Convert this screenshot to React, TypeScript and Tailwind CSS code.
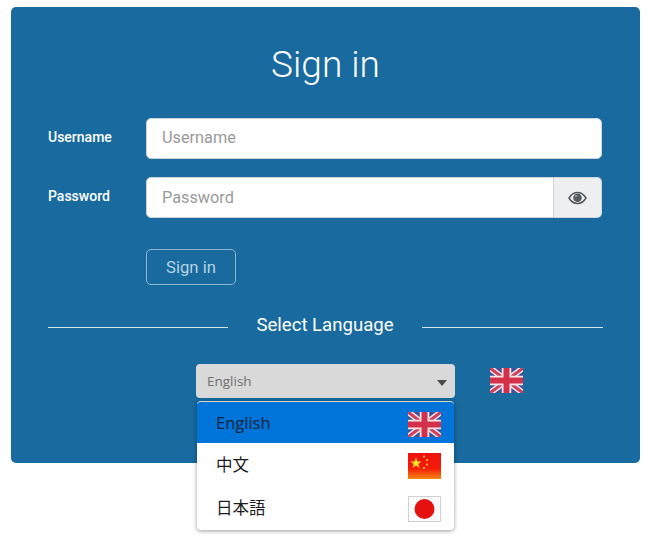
const UkFlag = () => (
    <svg width="33" height="25" viewBox="0 0 33 25" className="mt-[1px] block blur-[0.5px]">
        <rect width="33" height="25" fill="#3f5199" />
        <path d="M0 0L33 25M33 0L0 25" stroke="#f6e6ea" strokeWidth="6" />
        <path d="M0 0L33 25M33 0L0 25" stroke="#d0405a" strokeWidth="3" />
        <path d="M16.500 0V25M0 12.500H33" stroke="#f6e6ea" strokeWidth="9.500" />
        <path d="M16.500 0V25M0 12.500H33" stroke="#d3304a" strokeWidth="6" />
    </svg>
)

const CnFlag = () => (
    <svg width="33" height="26" viewBox="0 0 33 26" className="mt-[1px] block blur-[0.3px]">
        <defs>
            <linearGradient id="cn" x1="0" y1="0" x2="0" y2="1">
                <stop offset="0" stopColor="#f01010" />
                <stop offset="0.6" stopColor="#f51c08" />
                <stop offset="1" stopColor="#f58a10" />
            </linearGradient>
        </defs>
        <rect width="33" height="26" fill="url(#cn)" />
        <path d="M8 4.500l1.500 4h4l-3.200 2.500 1.200 4-3.500-2.400-3.500 2.400 1.200-4-3.200-2.500h4z" fill="#fde02a" />
        <circle cx="16" cy="3.500" r="1" fill="#fde02a" />
        <circle cx="19" cy="7" r="1" fill="#fde02a" />
        <circle cx="19" cy="11.500" r="1" fill="#fde02a" />
        <circle cx="16" cy="15" r="1" fill="#fde02a" />
    </svg>
)

const JpFlag = () => (
    <svg width="33" height="26" viewBox="0 0 33 26" className="mt-[1px] block">
        <rect x="0.500" y="0.500" width="32" height="25" fill="#fbfbfb" stroke="#d0d0d0" />
        <circle cx="16.500" cy="13" r="10" fill="#e5100f" />
    </svg>
)

const EyeIcon = () => (
    <svg width="19" height="14" viewBox="0 0 19 14" className="block" fill="none">
        <path d="M1 7C3.200 3.300 6 1.500 9.500 1.500S15.800 3.300 18 7C15.800 10.700 13 12.500 9.500 12.500S3.200 10.700 1 7Z" stroke="#555a5f" strokeWidth="1.500" />
        <circle cx="9.500" cy="6.800" r="4.300" fill="#555a5f" />
        <circle cx="8" cy="5" r="1" fill="#aeb1b4" />
    </svg>
)

const FormRow = ({ label, children }: { label: string; children: React.ReactNode }) => (
    <div className="flex items-start">
        <label className="w-[98px] pt-[10px] text-[14px] leading-[18px] font-medium text-white">{label}</label>
        {children}
    </div>
)

const App = () => {
    return (
        <div className="h-[542px] w-[659px] bg-white pt-[7px] pl-[11px] font-['Roboto',sans-serif]">
            <div className="relative h-[456px] w-[629px] rounded-[5px] bg-[#186a9f] pt-[34px] pr-[37px] pl-[37px]">
                <h1 className="text-center text-[37px] leading-[48px] font-light text-white">Sign in</h1>

                <div className="mt-[29px] flex flex-col gap-[18px]">
                    <FormRow label="Username">
                        <input
                            placeholder="Username"
                            className="h-[41px] w-[456px] rounded-[5px] border border-[#ced4da] bg-white px-[15px] pb-[2px] text-[16.300px] placeholder:text-[#9a9a9a]"
                        />
                    </FormRow>
                    <FormRow label="Password">
                        <div className="flex h-[41px] w-[456px]">
                            <input
                                placeholder="Password"
                                className="h-full min-w-0 flex-1 rounded-l-[5px] border border-[#ced4da] bg-white px-[15px] text-[16.300px] placeholder:text-[#9a9a9a]"
                            />
                            <div className="flex w-[48px] items-center justify-center rounded-r-[5px] border border-l-0 border-[#ced4da] bg-[#eeeff1]">
                                <EyeIcon />
                            </div>
                        </div>
                    </FormRow>
                </div>

                <button className="mt-[31px] ml-[98px] h-[36px] w-[90px] rounded-[5px] border border-[#8fb6d0] pt-[2px] text-[16.700px] text-[#b9d3e4]">
                    Sign in
                </button>

                <div className="mt-[30px] flex items-center justify-between">
                    <div className="h-px w-[180px] bg-[#d5e5ef]" />
                    <span className="relative -top-[2px] text-[18.600px] leading-[24px] text-white">Select Language</span>
                    <div className="h-px w-[181px] bg-[#d5e5ef]" />
                </div>

                <div className="mt-[25px] ml-[148px] flex items-center">
                    <div className="flex h-[34px] w-[259px] items-center justify-between rounded-[4px] bg-[#d9d9d9] pr-[8px] pl-[11px]">
                        <span className="font-['Open_Sans',sans-serif] text-[13.500px] text-[#6f6f6f]">English</span>
                        <span className="mt-[3px] h-0 w-0 border-x-[5.500px] border-t-[6px] border-x-transparent border-t-[#4a4a4a]" />
                    </div>
                    <div className="-mt-[3px] ml-[35px]">
                        <UkFlag />
                    </div>
                </div>

                {/* dropdown sits over the card edge */}
                <ul className="absolute top-[394px] left-[186px] w-[257px] overflow-hidden rounded-[4px] border-t border-[#d5d5d5] bg-white pb-[1px] font-['Open_Sans','Noto_Sans_CJK_JP',sans-serif] text-[16.500px] text-[#1c1c1c] shadow-[0_1px_4px_rgba(0,0,0,0.4)]">
                    <li className="flex h-[41px] items-center justify-between bg-[#0074d9] pt-[2px] pr-[13px] pl-[19px] text-[#0b2338]">
                        English
                        <UkFlag />
                    </li>
                    <li className="flex h-[43px] items-center justify-between pt-[2px] pr-[13px] pl-[19px]">
                        中文
                        <CnFlag />
                    </li>
                    <li className="flex h-[43px] items-center justify-between pt-[2px] pr-[13px] pl-[19px]">
                        日本語
                        <JpFlag />
                    </li>
                </ul>
            </div>
        </div>
    )
}

export default App
